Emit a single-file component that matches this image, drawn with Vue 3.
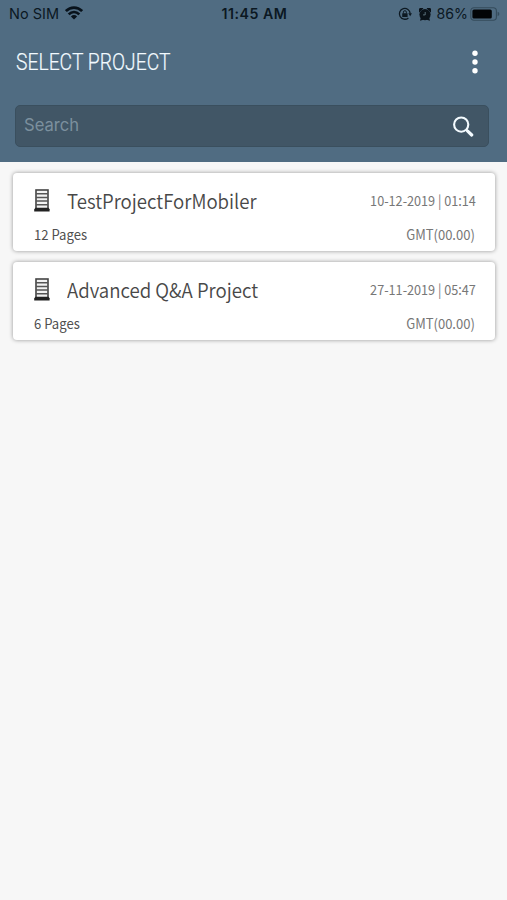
<script setup>
const projects = [
  { name: 'TestProjectForMobiler', date: '10-12-2019 | 01:14', pages: '12 Pages', zone: 'GMT(00.00)' },
  { name: 'Advanced Q&A Project', date: '27-11-2019 | 05:47', pages: '6 Pages', zone: 'GMT(00.00)' },
]
</script>

<template>
  <div class="screen">
    <header class="header">
      <div class="status">
        <div class="carrier">
          <span>No SIM</span>
          <svg class="wifi" width="18" height="14" viewBox="0 0 18 14">
            <g fill="none" stroke="#08121b" stroke-width="2.7">
              <path d="M.9 5.1C5.6.5 12.4.5 17.1 5.1" />
              <path d="M3.7 8.4C6.8 5.4 11.2 5.4 14.3 8.4" />
            </g>
            <path d="M5.9 10.4Q9 7.7 12.1 10.4L9 13.6Z" fill="#08121b" />
          </svg>
        </div>
        <span class="clock">11:45 AM</span>
        <div class="indicators">
          <svg class="lock" width="14" height="14" viewBox="0 0 14 14">
            <path d="M10.4 10.9A5.4 5.4 0 1 1 12.2 6.5" fill="none" stroke="#0d1922" stroke-width="1.3" />
            <path d="M10.3 6.3h3.6L12.2 9.2Z" fill="#0d1922" />
            <rect x="4.2" y="6.2" width="5.4" height="3.7" rx=".5" fill="#0d1922" />
            <path d="M5.4 6.5V5.2a1.5 1.5 0 0 1 3 0v1.3" fill="none" stroke="#0d1922" />
          </svg>
          <svg class="alarm" width="12" height="13" viewBox="0 0 12 13">
            <circle cx="6" cy="6.6" r="5.6" fill="#0a1219" />
            <path d="M.2 4.4A2.5 2.5 0 0 1 4.4.6ZM11.8 4.4A2.5 2.5 0 0 0 7.6.6ZM1 12.8 2 9l3 2.5ZM11 12.8 10 9l-3 2.5Z" fill="#0a1219" />
            <path d="M6.2 4v2.9H4" fill="none" stroke="#6f8792" stroke-width=".8" />
          </svg>
          <span class="percent">86%</span>
          <svg class="battery" width="30" height="14" viewBox="0 0 30 14">
            <rect x=".8" y=".8" width="25.6" height="12.4" rx="3.2" fill="none" stroke="#344b5b" stroke-width="1.1" />
            <rect x="2.4" y="2.4" width="19.4" height="9.2" rx="1.6" fill="#020406" />
            <path d="M27.6 4.8q1.8.6 1.8 2.2t-1.8 2.2Z" fill="#344b5b" />
          </svg>
        </div>
      </div>
      <div class="titlebar">
        <h1>SELECT PROJECT</h1>
        <svg width="6" height="24" viewBox="0 0 6 24" fill="#fff">
          <circle cx="3" cy="3.3" r="2.7" />
          <circle cx="3" cy="12" r="2.7" />
          <circle cx="3" cy="20.7" r="2.7" />
        </svg>
      </div>
      <div class="search">
        <span>Search</span>
        <svg width="22" height="22" viewBox="0 0 22 22" fill="none" stroke="#f4fbff">
          <circle cx="9.2" cy="9.6" r="7.1" stroke-width="2.1" />
          <path d="m14.2 14.6 1.5 1.5" stroke-width="2.2" />
          <path d="m15.7 16.1 4 3.9" stroke-width="3.2" stroke-linecap="round" />
        </svg>
      </div>
    </header>
    <main class="list">
      <article v-for="project in projects" :key="project.name" class="card">
        <div class="main-row">
          <svg class="stack" width="16" height="23" viewBox="0 0 16 23">
            <rect x="2" y="1" width="12" height="19" fill="#f2f2f2" stroke="#444" stroke-width="1.6" />
            <path d="M2 4.7h12M2 8.4h12M2 12.1h12M2 15.8h12" stroke="#555" stroke-width="1.5" />
            <path d="M1.5 18.8h13l1.1 1.5v2.2H.2v-2.2Z" fill="#222" />
          </svg>
          <h2>{{ project.name }}</h2>
          <span class="date">{{ project.date }}</span>
        </div>
        <div class="sub-row">
          <span class="pages">{{ project.pages }}</span>
          <span class="zone">{{ project.zone }}</span>
        </div>
      </article>
    </main>
  </div>
</template>

<style>
body {
  margin: 0;
  background: #f7f7f7;
}
</style>

<style scoped>
.screen {
  width: 507px;
  height: 900px;
  overflow: hidden;
  background: #f7f7f7;
  font-family: "Noto Sans CJK SC", "Noto Sans", sans-serif;
}
svg {
  display: block;
  flex: none;
}
.header {
  box-sizing: border-box;
  height: 162px;
  background: #506c82;
}
.status {
  box-sizing: border-box;
  height: 28px;
  padding: 0 7px 0 9px;
  display: grid;
  grid-template-columns: 1fr auto 1fr;
  align-items: center;
  font: 14.5px/28px Inter, sans-serif;
  color: #0b1822;
}
.carrier, .indicators {
  display: flex;
  align-items: center;
}
.carrier {
  gap: 6px;
}
.wifi {
  margin-bottom: 2px;
}
.clock {
  font-weight: 600;
  font-size: 14.2px;
  letter-spacing: 0.5px;
}
.indicators {
  justify-content: flex-end;
}
.battery {
  margin-bottom: 1px;
}
.alarm {
  margin: 0 5px 0 7px;
}
.percent {
  margin-right: 2px;
  font-size: 14.2px;
}
.titlebar {
  height: 68px;
  padding: 0 29px 0 16px;
  display: flex;
  justify-content: space-between;
  align-items: center;
}
h1 {
  margin: 0;
  font: 300 24px/30px Roboto, sans-serif;
  color: #f2faff;
  -webkit-text-stroke: 0.2px #f2faff;
  transform: scaleX(0.805);
  transform-origin: left;
}
.search {
  box-sizing: border-box;
  width: 474px;
  height: 42px;
  margin: 9px 0 0 15px;
  padding: 0 14px 0 8px;
  display: flex;
  align-items: center;
  justify-content: space-between;
  border: 1px solid #3a4f5e;
  border-radius: 5px;
  background: #415666;
}
.search span {
  margin-bottom: 2px;
  font: 16.6px/24px Inter, sans-serif;
  color: #7c909e;
}
.list {
  padding: 11px 12px 0 13px;
  display: flex;
  flex-direction: column;
  gap: 11px;
}
.card {
  box-sizing: border-box;
  height: 78px;
  padding: 13px 19px 0 21px;
  border-radius: 4px;
  background: #fff;
  box-shadow: 0 0 4px rgba(0, 0, 0, 0.4);
}
.main-row {
  display: flex;
  align-items: center;
  height: 30px;
}
.stack {
  margin-bottom: 2px;
}
h2 {
  margin: 0 0 0 17px;
  font-size: 20px;
  font-weight: 350;
  line-height: 30px;
  color: #484848;
  transform: scaleX(0.932);
  transform-origin: left;
}
.date {
  margin: 0 0 2px auto;
  font-size: 14px;
  color: #777;
  transform: scaleX(0.905);
  transform-origin: right;
}
.sub-row {
  display: flex;
  justify-content: space-between;
  padding: 8px 1px 0 0;
  font-size: 14px;
  line-height: 20px;
}
.pages {
  color: #505050;
  transform: scaleX(0.935);
  transform-origin: left;
}
.zone {
  color: #777;
  transform: scaleX(0.93);
  transform-origin: right;
}
</style>
